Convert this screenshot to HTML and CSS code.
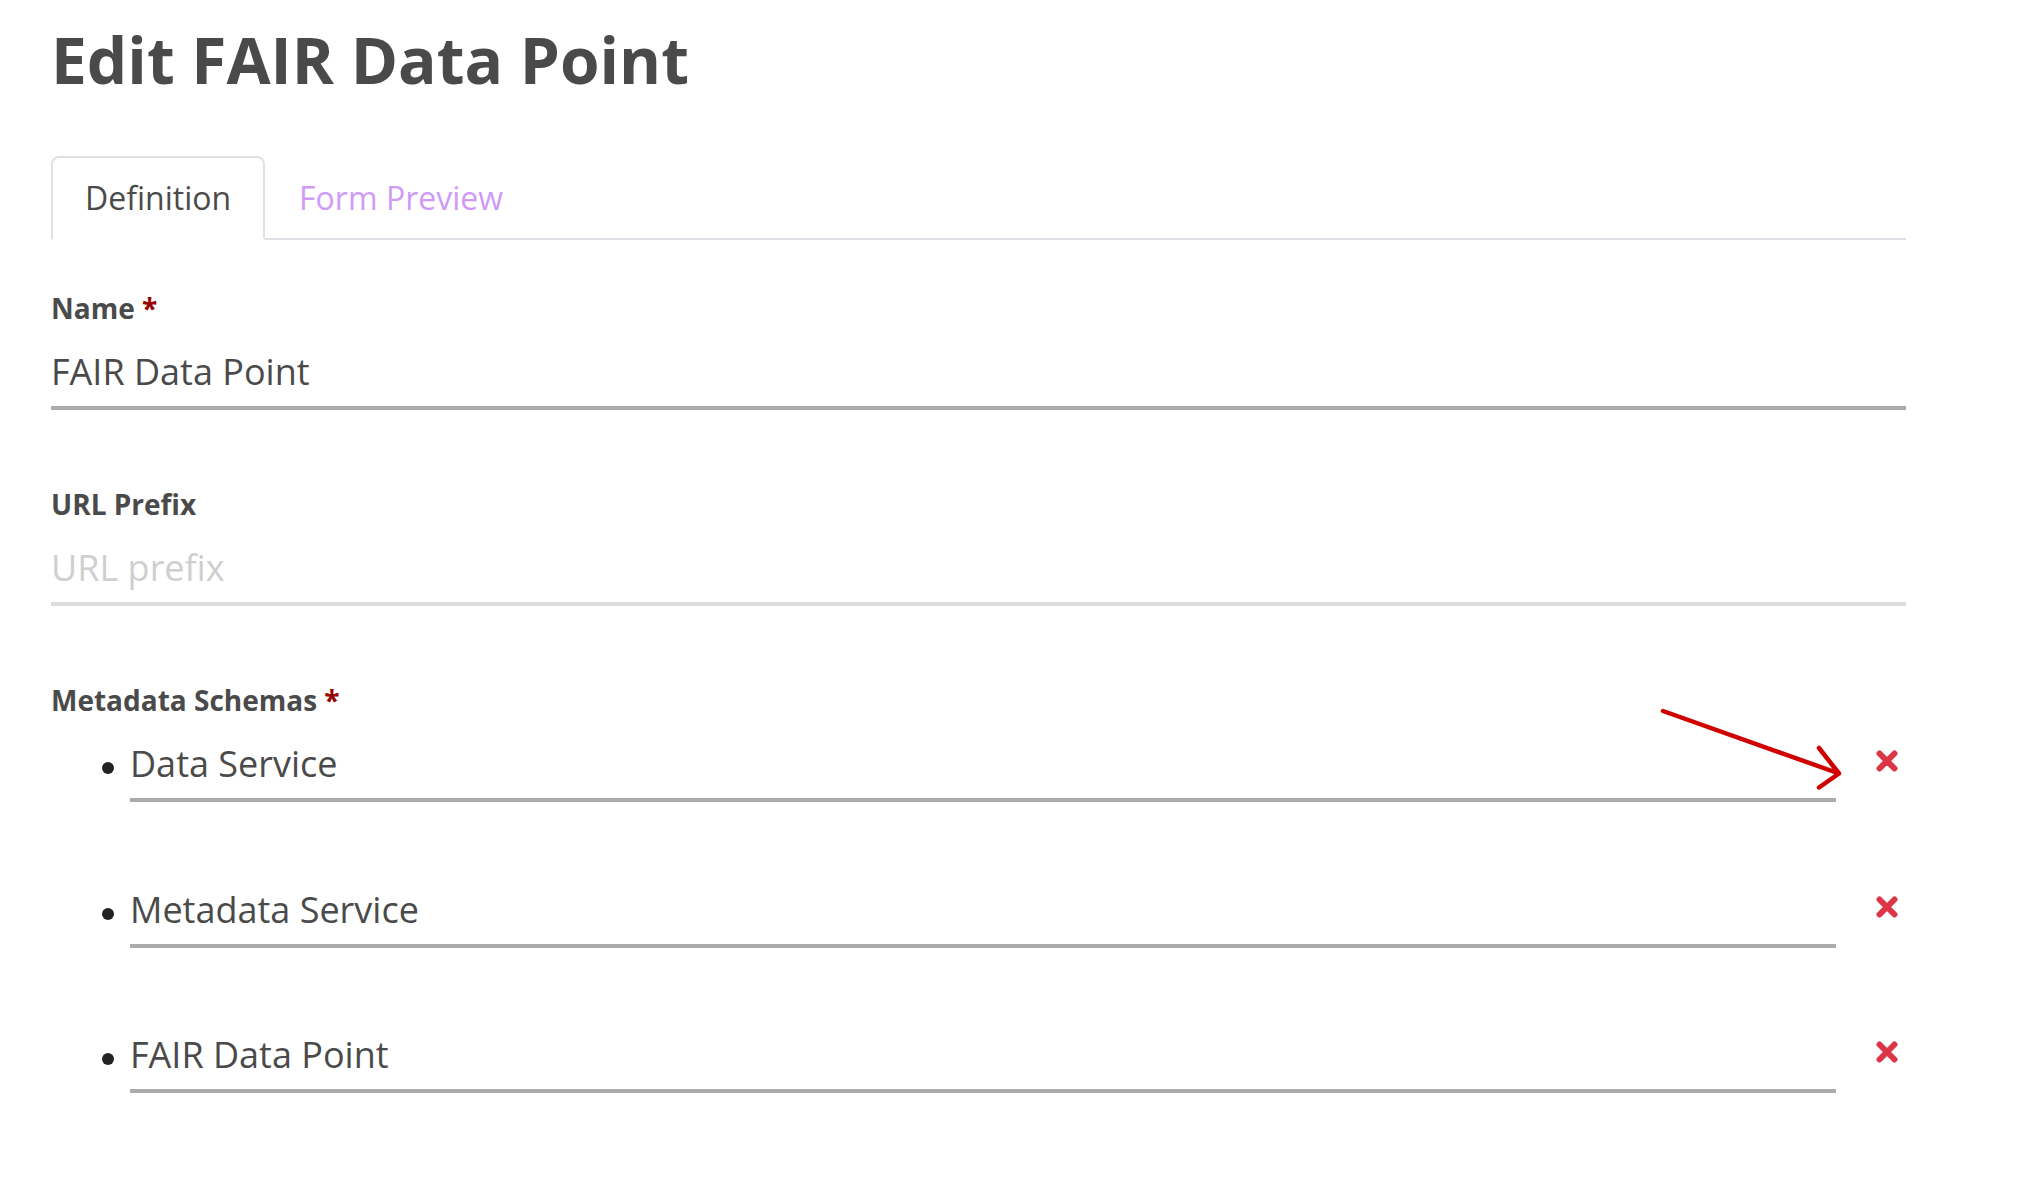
FILE: index.html
```html
<!DOCTYPE html>
<html lang="en">
<head>
<meta charset="utf-8">
<title>Edit FAIR Data Point</title>
<link rel="stylesheet" href="styles.css">
</head>
<body>
<div class="page">
  <h1 class="title">Edit FAIR Data Point</h1>

  <ul class="tabs">
    <li><a class="tab tab-active">Definition</a></li>
    <li><a class="tab tab-link">Form Preview</a></li>
  </ul>

  <div class="form">
    <div class="field">
      <label class="label">Name <span class="req">*</span></label>
      <input class="input" type="text" value="FAIR Data Point">
    </div>

    <div class="field">
      <label class="label">URL Prefix</label>
      <input class="input input-empty" type="text" placeholder="URL prefix">
    </div>

    <div class="field">
      <label class="label">Metadata Schemas <span class="req">*</span></label>
      <ul class="schemas">
        <li class="schema">
          <span class="dot"></span>
          <input class="input schema-input" type="text" value="Data Service">
          <span class="remove">
            <svg viewBox="0 0 22 22" width="22" height="22"><path d="M3.5 3.5 L18.5 18.5 M18.5 3.5 L3.5 18.5" stroke="#dc3545" stroke-width="6" stroke-linecap="round" fill="none"/></svg>
          </span>
        </li>
        <li class="schema">
          <span class="dot"></span>
          <input class="input schema-input" type="text" value="Metadata Service">
          <span class="remove">
            <svg viewBox="0 0 22 22" width="22" height="22"><path d="M3.5 3.5 L18.5 18.5 M18.5 3.5 L3.5 18.5" stroke="#dc3545" stroke-width="6" stroke-linecap="round" fill="none"/></svg>
          </span>
        </li>
        <li class="schema">
          <span class="dot"></span>
          <input class="input schema-input" type="text" value="FAIR Data Point">
          <span class="remove">
            <svg viewBox="0 0 22 22" width="22" height="22"><path d="M3.5 3.5 L18.5 18.5 M18.5 3.5 L3.5 18.5" stroke="#dc3545" stroke-width="6" stroke-linecap="round" fill="none"/></svg>
          </span>
        </li>
      </ul>
    </div>
  </div>

  <svg class="annotation" width="200" height="100" viewBox="1650 680 200 100">
    <path d="M1663 690 L1839 752.5 M1819 727 L1839 752.5 L1819 766.5" stroke="#d10000" stroke-width="4.5" stroke-linecap="round" stroke-linejoin="round" fill="none"/>
  </svg>
</div>
</body>
</html>
```

FILE: styles.css
```css
html, body {
  margin: 0;
  padding: 0;
  background: #fff;
}

body {
  font-family: "Open Sans", "Noto Sans", "Liberation Sans", sans-serif;
  color: #4a4a4a;
}

.page {
  position: relative;
  width: 1855px;
  margin-left: 51px;
  height: 1190px;
}

.title {
  margin: 21px 0 0;
  font-size: 64px;
  line-height: 78px;
  font-weight: 700;
  color: #4a4a4a;
}

.tabs {
  display: flex;
  list-style: none;
  margin: 57px 0 0;
  padding: 0;
  border-bottom: 2px solid #dee2e6;
}

.tab {
  display: block;
  padding: 16px 32px;
  border: 2px solid transparent;
  border-radius: 8px 8px 0 0;
  margin-bottom: -2px;
  font-size: 32px;
  line-height: 48px;
  cursor: pointer;
}

.tab-active {
  color: #4a4a4a;
  border-color: #dee2e6 #dee2e6 #fff;
  background: #fff;
}

.tab-link {
  color: #cf9bf7;
}

.form {
  display: flex;
  flex-direction: column;
  gap: 73px;
  margin-top: 47px;
}

.field {
  display: flex;
  flex-direction: column;
  gap: 16px;
}

.label {
  font-size: 28px;
  line-height: 42px;
  font-weight: 700;
  color: #4a4a4a;
}

.req {
  color: #990000;
}

.input {
  display: block;
  box-sizing: content-box;
  width: auto;
  height: 54px;
  margin: 0;
  padding: 0 0 7px;
  border: none;
  border-bottom: 4px solid #ababab;
  outline: none;
  background: transparent;
  font-family: "Open Sans", "Noto Sans", "Liberation Sans", sans-serif;
  font-size: 36px;
  line-height: 54px;
  color: #4a4a4a;
}

.input-empty {
  border-bottom-color: #dcdcdc;
}

.input::placeholder {
  color: #cfcfcf;
}

.schemas {
  list-style: none;
  margin: 0;
  padding: 0;
  display: flex;
  flex-direction: column;
  gap: 80.5px;
}

.schema {
  display: flex;
  align-items: flex-start;
}

.dot {
  flex: none;
  width: 12px;
  height: 12px;
  border-radius: 50%;
  background: #222;
  margin: 25px 16px 0 51px;
}

.schema-input {
  flex: 1;
  min-width: 0;
}

.remove {
  flex: none;
  display: block;
  width: 22px;
  height: 22px;
  margin: 13px 8px 0 40px;
}

.remove svg {
  display: block;
}

.annotation {
  position: absolute;
  left: 1599px;
  top: 680px;
  overflow: visible;
}
```
